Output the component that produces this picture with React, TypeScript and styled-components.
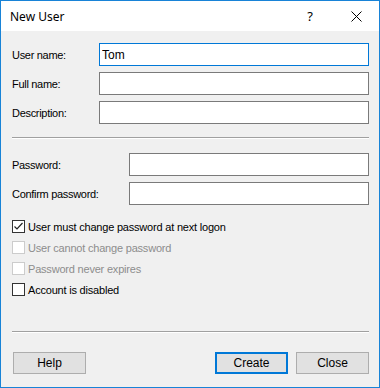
import React from "react";
import styled, { createGlobalStyle } from "styled-components";

const Global = createGlobalStyle`
  html, body { margin: 0; padding: 0; background: #ffffff; }
  * { box-sizing: border-box; }
`;

const Window = styled.div`
  width: 380px;
  height: 388px;
  border: 1px solid #1883d7;
  display: flex;
  flex-direction: column;
  font-family: "Liberation Sans", Arial, sans-serif;
  font-size: 11px;
  color: #000;
`;

const TitleBar = styled.div`
  height: 30px;
  background: #fff;
  display: flex;
  align-items: center;
  padding-left: 9px;
`;

const Title = styled.div`
  flex: 1;
  font-family: "Noto Sans", "Open Sans", sans-serif;
  font-size: 12px;
  color: #000;
  padding-top: 1px;
`;

const TitleButton = styled.div`
  width: 46px;
  height: 30px;
  display: flex;
  align-items: center;
  justify-content: center;
  font-family: "Noto Sans", sans-serif;
  font-size: 13px;
`;

const Body = styled.div`
  flex: 1;
  background: #f0f0f0;
  padding: 12px 10px 0 11px;
  display: flex;
  flex-direction: column;
`;

const FieldGrid = styled.div<{ $labelWidth: number; $top: number }>`
  display: grid;
  grid-template-columns: ${(p) => p.$labelWidth}px 1fr;
  grid-auto-rows: 23px;
  row-gap: 6px;
  margin-top: ${(p) => p.$top}px;
  align-items: center;
`;

const Label = styled.label`
  color: #000;
  font-size: 11px;
  letter-spacing: -0.3px;
`;

const TextBox = styled.input<{ $focused?: boolean }>`
  height: 23px;
  width: 100%;
  border: 1px solid ${(p) => (p.$focused ? "#0078d7" : "#7a7a7a")};
  background: #fff;
  padding: 0 2px;
  font-family: "Liberation Sans", Arial, sans-serif;
  font-size: 12px;
  color: #000;
  outline: none;
  margin: 0;
`;

const Separator = styled.div<{ $top: number }>`
  height: 2px;
  margin-top: ${(p) => p.$top}px;
  border-top: 1px solid #a0a0a0;
  border-bottom: 1px solid #ffffff;
`;

const CheckList = styled.div`
  margin-top: 11px;
  display: flex;
  flex-direction: column;
`;

const CheckRow = styled.div<{ $disabled?: boolean }>`
  height: 21px;
  display: flex;
  align-items: center;
  gap: 3px;
  color: ${(p) => (p.$disabled ? "#8d8d8d" : "#000")};
  font-size: 11px;
  letter-spacing: -0.2px;
`;

const Box = styled.span<{ $disabled?: boolean }>`
  width: 13px;
  height: 13px;
  border: 1px solid ${(p) => (p.$disabled ? "#cccccc" : "#333333")};
  background: #fff;
  display: flex;
  align-items: center;
  justify-content: center;
`;

const ButtonRow = styled.div`
  margin-top: 19px;
  display: flex;
  gap: 8px;
  padding-left: 1px;
`;

const Button = styled.button<{ $default?: boolean }>`
  width: 73px;
  height: 22px;
  background: #e1e1e1;
  border: ${(p) => (p.$default ? "2px solid #0078d7" : "1px solid #adadad")};
  font-family: "Liberation Sans", Arial, sans-serif;
  font-size: 12px;
  color: #000;
  padding: 0;
  margin: 0;
`;

const Grow = styled.div`
  flex: 1;
`;

function Check({ checked, disabled, label }: { checked?: boolean; disabled?: boolean; label: string }) {
  return (
    <CheckRow $disabled={disabled}>
      <Box $disabled={disabled}>
        {checked && (
          <svg width="11" height="11" viewBox="0 0 11 11">
            <path d="M1.5 5.5 L4 8 L9.5 2" stroke="#222" strokeWidth="1.2" fill="none" />
          </svg>
        )}
      </Box>
      <span>{label}</span>
    </CheckRow>
  );
}

export default function App() {
  return (
    <>
      <Global />
      <Window>
        <TitleBar>
          <Title>New User</Title>
          <TitleButton>?</TitleButton>
          <TitleButton>
            <svg width="11" height="11" viewBox="0 0 11 11">
              <path d="M0.5 0.5 L10.5 10.5 M10.5 0.5 L0.5 10.5" stroke="#000" strokeWidth="1" fill="none" />
            </svg>
          </TitleButton>
        </TitleBar>
        <Body>
          <FieldGrid $labelWidth={87} $top={0}>
            <Label>User name:</Label>
            <TextBox $focused readOnly value="Tom" />
            <Label>Full name:</Label>
            <TextBox readOnly value="" />
            <Label>Description:</Label>
            <TextBox readOnly value="" />
          </FieldGrid>
          <Separator $top={13} />
          <FieldGrid $labelWidth={117} $top={14}>
            <Label>Password:</Label>
            <TextBox readOnly type="password" value="" />
            <Label>Confirm password:</Label>
            <TextBox readOnly type="password" value="" />
          </FieldGrid>
          <CheckList>
            <Check checked label="User must change password at next logon" />
            <Check disabled label="User cannot change password" />
            <Check disabled label="Password never expires" />
            <Check label="Account is disabled" />
          </CheckList>
          <Separator $top={31} />
          <ButtonRow>
            <Button>Help</Button>
            <Grow />
            <Button $default>Create</Button>
            <Button>Close</Button>
          </ButtonRow>
        </Body>
      </Window>
    </>
  );
}
